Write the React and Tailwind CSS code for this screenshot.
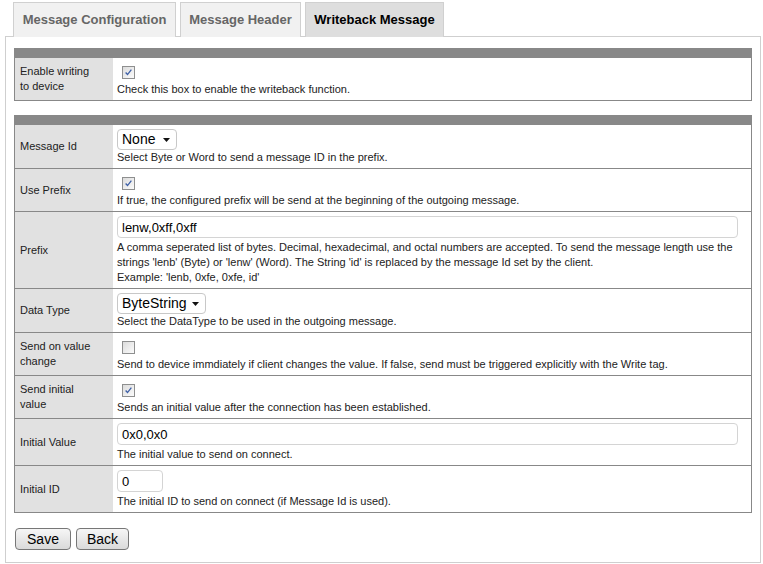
import React from 'react'

const font = { fontFamily: '"Liberation Sans", Arial, sans-serif' }

function Check({ checked }) {
  return (
    <div className="flex h-[20px] items-center pl-[5px]">
      <span className="inline-block h-[13px] w-[13px] border border-[#8e8f8f] bg-gradient-to-br from-[#dcdcdc] to-[#fbfbfb] p-px">
        {checked && (
          <svg viewBox="0 0 11 11" className="h-full w-full">
            <path d="M2 5.5 L4.3 8 L9 2" fill="none" stroke="#3d5fa6" strokeWidth="1.6" />
          </svg>
        )}
      </span>
    </div>
  )
}

function Select({ value, width }) {
  return (
    <div className={`flex h-[21px] items-center rounded-sm border border-[#c8c8c8] bg-white pl-[4px] pr-[6px] text-[14px] text-black ${width}`}>
      <span>{value}</span>
      <svg className="ml-auto" width="7" height="4" viewBox="0 0 7 4"><path d="M0 0h7L3.5 4z" fill="#111" /></svg>
    </div>
  )
}

function TextBox({ value, width }) {
  return (
    <div className={`mb-[2px] flex h-[22px] items-center rounded-sm border border-[#d4d4d4] bg-white px-[4px] text-[13px] text-black ${width}`}>
      {value}
    </div>
  )
}

function Row({ label, children, first }) {
  return (
    <div className={`grid grid-cols-[98px_1fr] ${first ? '' : 'border-t border-[#888]'}`}>
      <div className="flex items-center bg-[#e1e1e1] px-[5px] text-[11px] leading-[15px] text-[#222]">{label}</div>
      <div className="flex flex-col justify-center px-[4px] pb-[3px] pt-[4px] text-[11px] leading-[15px] text-[#222]">{children}</div>
    </div>
  )
}

function Section({ children }) {
  return (
    <div className="border-x border-b border-[#888]">
      <div className="h-[10px] bg-[#888]" />
      {children}
    </div>
  )
}

const tabs = [
  { name: 'Message Configuration', w: 'w-[163px]' },
  { name: 'Message Header', w: 'w-[121px]' },
  { name: 'Writeback Message', w: 'w-[139px]', active: true },
]

export default function App() {
  return (
    <div className="h-[564px] w-[763px] bg-white" style={font}>
      <div className="flex gap-[4px] pl-[13px] pt-[2px]">
        {tabs.map(t => (
          <div
            key={t.name}
            className={`relative -mb-px flex h-[35px] items-center justify-center border border-b-0 border-[#d0d0d0] text-[13px] font-bold ${t.w} ${t.active ? 'bg-[#dedede] text-black' : 'bg-[#f1f1f1] text-[#666]'}`}
          >
            {t.name}
          </div>
        ))}
      </div>
      <div className="mx-[5px] h-[527px] w-[756px] border border-[#cfcfcf] px-[8px] pt-[11px]">
        <Section>
          <Row label={<span>Enable writing<br />to device</span>} first>
            <Check checked />
            <div>Check this box to enable the writeback function.</div>
          </Row>
        </Section>
        <div className="h-[14px]" />
        <Section>
          <Row label="Message Id" first>
            <Select value="None" width="w-[60px]" />
            <div>Select Byte or Word to send a message ID in the prefix.</div>
          </Row>
          <Row label="Use Prefix">
            <Check checked />
            <div>If true, the configured prefix will be send at the beginning of the outgoing message.</div>
          </Row>
          <Row label="Prefix">
            <TextBox value="lenw,0xff,0xff" width="w-[621px]" />
            <div>A comma seperated list of bytes. Decimal, hexadecimal, and octal numbers are accepted. To send the message length use the strings 'lenb' (Byte) or 'lenw' (Word). The String 'id' is replaced by the message Id set by the client.<br />Example: 'lenb, 0xfe, 0xfe, id'</div>
          </Row>
          <Row label="Data Type">
            <Select value="ByteString" width="w-[89px]" />
            <div>Select the DataType to be used in the outgoing message.</div>
          </Row>
          <Row label={<span>Send on value<br />change</span>}>
            <Check />
            <div>Send to device immdiately if client changes the value. If false, send must be triggered explicitly with the Write tag.</div>
          </Row>
          <Row label={<span>Send initial<br />value</span>}>
            <Check checked />
            <div>Sends an initial value after the connection has been established.</div>
          </Row>
          <Row label="Initial Value">
            <TextBox value="0x0,0x0" width="w-[621px]" />
            <div>The initial value to send on connect.</div>
          </Row>
          <Row label="Initial ID">
            <TextBox value="0" width="w-[46px]" />
            <div>The initial ID to send on connect (if Message Id is used).</div>
          </Row>
        </Section>
        <div className="mt-[15px] flex gap-[5px] pl-px">
          <button className="h-[22px] w-[56px] rounded-sm border border-[#777] bg-gradient-to-b from-[#f6f6f6] to-[#dadada] text-[14px] text-black">Save</button>
          <button className="h-[22px] w-[53px] rounded-sm border border-[#777] bg-gradient-to-b from-[#f6f6f6] to-[#dadada] text-[14px] text-black">Back</button>
        </div>
      </div>
    </div>
  )
}
